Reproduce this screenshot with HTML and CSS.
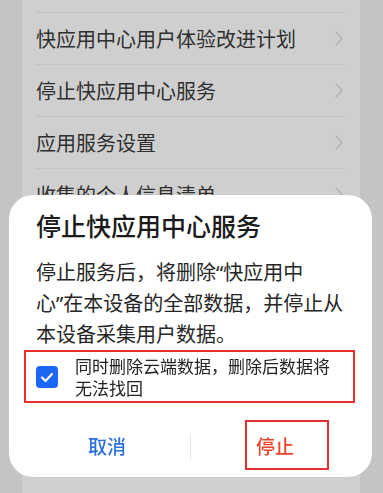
FILE: index.html
```html
<!DOCTYPE html>
<html lang="zh-CN">
<head>
<meta charset="utf-8">
<link rel="stylesheet" href="styles.css">
</head>
<body>
<div class="list">
  <div class="row"><span class="label">快应用中心用户体验改进计划</span><span class="chev"><svg width="8" height="15" viewBox="0 0 8 15"><polyline points="1,1 7,7.5 1,14" fill="none" stroke="#b3b3b3" stroke-width="1.5" stroke-linecap="round" stroke-linejoin="round"/></svg></span></div>
  <div class="row"><span class="label">停止快应用中心服务</span><span class="chev"><svg width="8" height="15" viewBox="0 0 8 15"><polyline points="1,1 7,7.5 1,14" fill="none" stroke="#b3b3b3" stroke-width="1.5" stroke-linecap="round" stroke-linejoin="round"/></svg></span></div>
  <div class="row"><span class="label">应用服务设置</span><span class="chev"><svg width="8" height="15" viewBox="0 0 8 15"><polyline points="1,1 7,7.5 1,14" fill="none" stroke="#b3b3b3" stroke-width="1.5" stroke-linecap="round" stroke-linejoin="round"/></svg></span></div>
  <div class="row"><span class="label">收集的个人信息清单</span><span class="chev"><svg width="8" height="15" viewBox="0 0 8 15"><polyline points="1,1 7,7.5 1,14" fill="none" stroke="#b3b3b3" stroke-width="1.5" stroke-linecap="round" stroke-linejoin="round"/></svg></span></div>
</div>

<div class="dialog">
  <div class="title">停止快应用中心服务</div>
  <div class="body">停止服务后，将删除<span class="q">“</span>快应用中<br>心<span class="q">”</span>在本设备的全部数据，并停止从<br>本设备采集用户数据。</div>
  <div class="check-row">
    <span class="checkbox"><svg width="22" height="22" viewBox="0 0 22 22"><polyline points="6,11.5 9.5,15 16,8" fill="none" stroke="#ffffff" stroke-width="2.2" stroke-linecap="round" stroke-linejoin="round"/></svg></span>
    <span class="check-text">同时删除云端数据，删除后数据将无法找回</span>
  </div>
  <div class="buttons">
    <div class="btn cancel">取消</div>
    <div class="divider"></div>
    <div class="btn stop"><span class="stop-box">停止</span></div>
  </div>
</div>
</body>
</html>
```

FILE: styles.css
```css
html, body {
  margin: 0;
  padding: 0;
}
body {
  width: 383px;
  height: 493px;
  overflow: hidden;
  background: #c3c4c6;
  font-family: "Noto Sans CJK SC", "Noto Sans", sans-serif;
}
.list {
  margin-left: 22px;
  width: 338px;
  height: 493px;
  background: #cfcfcf;
  padding: 12px 14px 0 14px;
  box-sizing: border-box;
}
.row {
  height: 51px;
  border-top: 1px solid #c3c3c3;
  display: flex;
  align-items: center;
  justify-content: space-between;
}
.label {
  font-size: 20px;
  color: #2f2f2f;
  line-height: 28px;
}
.chev {
  display: flex;
  margin-right: 3px;
}
.dialog {
  position: fixed;
  left: 9px;
  top: 195px;
  width: 363px;
  height: 282px;
  box-sizing: border-box;
  background: #ffffff;
  border-radius: 24px;
  padding-top: 12px;
}
.title {
  margin-left: 27px;
  font-size: 25px;
  line-height: 36px;
  font-weight: 500;
  color: #1b1b1b;
}
.body {
  margin: 14px 0 0 27px;
  font-size: 20px;
  line-height: 30px;
  color: #262626;
  white-space: nowrap;
}
.q {
  font-family: "Noto Sans", sans-serif;
}
.check-row {
  margin: 1px 17px 0 15px;
  height: 53px;
  box-sizing: border-box;
  border: 2px solid #e5302d;
  display: flex;
  align-items: center;
  padding: 0 12px 0 10px;
}
.checkbox {
  width: 22px;
  height: 22px;
  flex: none;
  border-radius: 4px;
  background: #1b66f2;
  display: flex;
}
.check-text {
  margin-left: 17px;
  font-size: 17px;
  line-height: 22px;
  color: #222222;
}
.buttons {
  margin: 17px 15px 0 15px;
  height: 50px;
  display: flex;
  align-items: center;
}
.btn {
  flex: none;
  width: 166px;
  box-sizing: border-box;
  height: 50px;
  display: flex;
  align-items: center;
  font-size: 19px;
  font-weight: 500;
}
.cancel {
  justify-content: center;
  color: #2b6ee0;
}
.divider {
  flex: none;
  width: 1px;
  height: 25px;
  background: #e6e6e6;
  margin-top: 5px;
}
.stop {
  justify-content: flex-start;
  padding-left: 54px;
  color: #e8452b;
}
.stop-box {
  height: 50px;
  box-sizing: border-box;
  border: 2px solid #e5302d;
  display: flex;
  align-items: center;
  padding: 0 33px 0 9px;
}
```
